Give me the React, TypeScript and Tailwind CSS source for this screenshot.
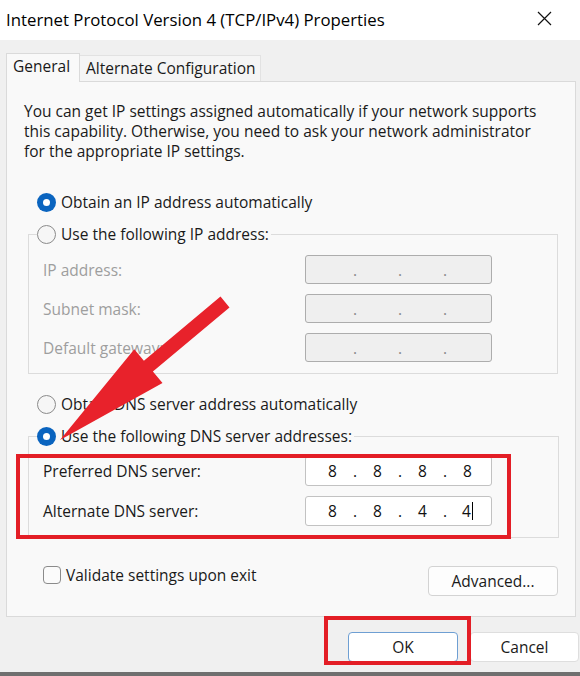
import React, { Fragment } from "react";

function Radio({ checked }: { checked?: boolean }) {
  return checked ? (
    <span className="w-[19px] h-[19px] rounded-full bg-[#0a64bf] flex items-center justify-center shrink-0">
      <span className="w-[7px] h-[7px] rounded-full bg-white" />
    </span>
  ) : (
    <span className="w-[19px] h-[19px] rounded-full border border-[#8b8b8b] bg-[#f6f6f6] shrink-0" />
  );
}

function IpBox({
  vals,
  disabled,
  cursor,
  tall,
}: {
  vals: string[];
  disabled?: boolean;
  cursor?: boolean;
  tall?: boolean;
}) {
  return (
    <div
      className={`w-[187px] ${tall ? "h-[30px]" : "h-[29px]"} rounded-[3px] border flex items-center pl-[4px] ${
        disabled ? "bg-[#efefef] border-[#adadad] text-[#8a8a8a]" : "bg-white border-[#c2c2c2] text-[#111]"
      }`}
    >
      {[0, 1, 2, 3].map((i) => (
        <Fragment key={i}>
          {i > 0 && <span className="w-0 flex justify-center">.</span>}
          <span className="w-[45px] flex justify-center items-center">
            {vals[i]}
            {cursor && i === 3 && <span className="inline-block w-px h-[18px] bg-black ml-[1px]" />}
          </span>
        </Fragment>
      ))}
    </div>
  );
}

export default function App() {
  return (
    <div className="relative w-[580px] h-[676px] bg-[#f0f0f0] overflow-hidden flex flex-col font-['Open_Sans',sans-serif] text-[15.5px] leading-[20px] text-[#1a1a1a]">
      {/* Title bar */}
      <div className="h-[40px] bg-white flex items-center justify-between pl-[6px] pr-[28px] shrink-0">
        <span className="text-[16.8px] text-black">Internet Protocol Version 4 (TCP/IPv4) Properties</span>
        <svg width="15" height="15" viewBox="0 0 15 15" className="mt-[-4px]">
          <path d="M1 1 L14 14 M14 1 L1 14" stroke="#111" strokeWidth="1.2" fill="none" />
        </svg>
      </div>

      {/* Tabs */}
      <div className="flex items-end pl-[6px] pt-[12px] h-[41px] shrink-0">
        <div className="w-[74px] h-[29px] bg-[#f9f9f9] border border-b-0 border-[#dadada] pl-[6px] pt-[2px] relative z-10 mb-[-1px]">
          General
        </div>
        <div className="w-[181px] h-[26px] bg-[#f5f5f5] border border-l-0 border-b-0 border-[#e2e2e2] pl-[6px] pt-[2px]">
          Alternate Configuration
        </div>
      </div>

      {/* Panel */}
      <div className="ml-[6px] w-[570px] h-[536px] bg-[#f9f9f9] border border-[#dadada] pl-[17px] pr-[17px] shrink-0">
        <p className="mt-[19px] leading-[20px] whitespace-nowrap">
          You can get IP settings assigned automatically if your network supports
          <br />
          this capability. Otherwise, you need to ask your network administrator
          <br />
          for the appropriate IP settings.
        </p>

        <div className="mt-[31px] ml-[13px] h-[20px] flex items-center gap-[5px]">
          <Radio checked />
          <span>Obtain an IP address automatically</span>
        </div>

        <fieldset className="mt-[12px] ml-[4px] w-[530px] border border-[#dcdcdc] p-0">
          <legend className="ml-[8px] h-[20px] flex items-center gap-[5px] pr-[2px]">
            <Radio />
            <span>Use the following IP address:</span>
          </legend>
          <div className="pl-[14px] pt-[11px] pb-[11px] grid grid-cols-[262px_187px] gap-y-[10px] items-center text-[#9e9e9e]">
            <span>IP address:</span>
            <IpBox vals={["", "", "", ""]} disabled />
            <span>Subnet mask:</span>
            <IpBox vals={["", "", "", ""]} disabled />
            <span>Default gateway:</span>
            <IpBox vals={["", "", "", ""]} disabled />
          </div>
        </fieldset>

        <div className="mt-[20px] ml-[13px] h-[20px] flex items-center gap-[5px]">
          <Radio />
          <span>Obtain DNS server address automatically</span>
        </div>

        <fieldset className="mt-[12px] ml-[4px] w-[531px] border border-[#dcdcdc] p-0">
          <legend className="ml-[8px] h-[20px] flex items-center gap-[5px] pr-[2px]">
            <Radio checked />
            <span>Use the following DNS server addresses:</span>
          </legend>
          <div className="pl-[14px] pt-[10px] pb-[11px] grid grid-cols-[262px_187px] gap-y-[10px] items-center">
            <span>Preferred DNS server:</span>
            <IpBox vals={["8", "8", "8", "8"]} tall />
            <span>Alternate DNS server:</span>
            <IpBox vals={["8", "8", "4", "4"]} tall cursor />
          </div>
        </fieldset>

        <div className="mt-[27px] flex items-start justify-between">
          <label className="ml-[19px] flex items-center gap-[5px] h-[19px]">
            <span className="w-[18px] h-[18px] rounded-[4px] border border-[#8b8b8b] bg-[#fbfbfb]" />
            <span>Validate settings upon exit</span>
          </label>
          <button className="w-[130px] h-[30px] mt-[1px] bg-[#fdfdfd] border border-[#d3d3d3] rounded-[4px]">
            Advanced...
          </button>
        </div>
      </div>

      {/* Bottom buttons */}
      <div className="mt-[15px] flex justify-end gap-[12px] pr-[1px] shrink-0">
        <button className="w-[110px] h-[30px] bg-white border border-[#6e9fd3] rounded-[4px]">OK</button>
        <button className="w-[109px] h-[30px] bg-white border border-[#dedede] rounded-[4px]">Cancel</button>
      </div>

      <div className="mt-auto h-[4px] bg-[#6f6f6f] shrink-0" />

      {/* Annotations */}
      <div className="absolute left-[16px] top-[454px] w-[495px] h-[85px] border-4 border-[#e31e26] pointer-events-none" />
      <div className="absolute left-[324px] top-[616px] w-[147px] h-[49px] border-4 border-[#e31e26] pointer-events-none" />
      <svg className="absolute left-0 top-0 pointer-events-none" width="580" height="676" viewBox="0 0 580 676">
        <polygon
          points="220.5,296.6 143.9,360.8 134.3,349.3 60,440 162.5,383.1 152.9,371.6 229.5,307.4"
          fill="#e8222b"
        />
      </svg>
    </div>
  );
}
